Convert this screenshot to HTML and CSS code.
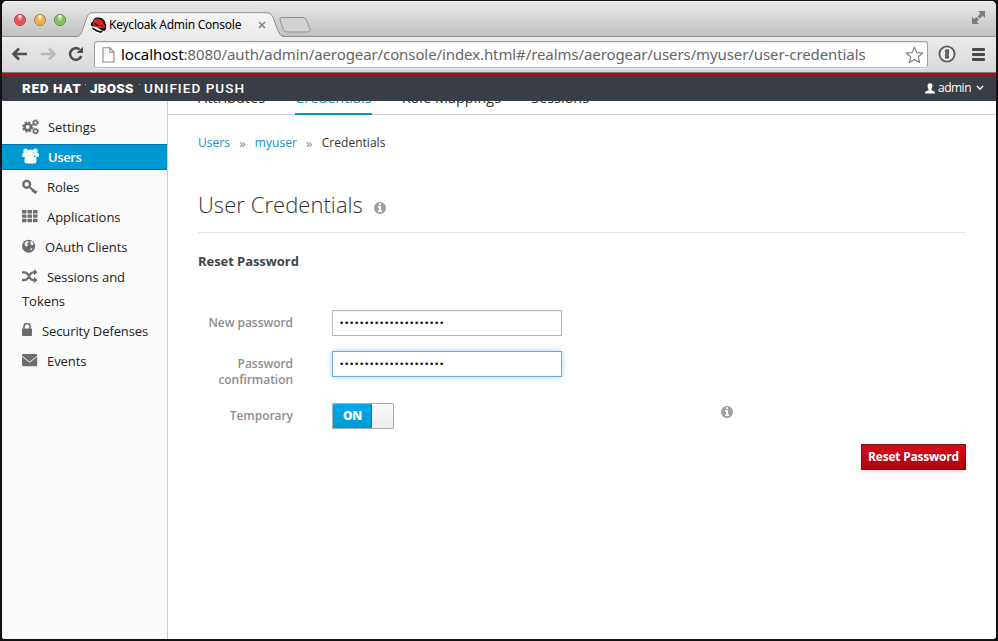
FILE: index.html
```html
<!DOCTYPE html>
<html lang="en">
<head>
<meta charset="utf-8">
<title>Keycloak Admin Console</title>
<link rel="stylesheet" href="styles.css">
</head>
<body>
<svg class="defs" width="0" height="0">
  <symbol id="info" viewBox="0 0 1792 1792"><path d="M1152 1376v-160q0-14-9-23t-23-9h-96v-512q0-14-9-23t-23-9h-320q-14 0-23 9t-9 23v160q0 14 9 23t23 9h96v320h-96q-14 0-23 9t-9 23v160q0 14 9 23t23 9h448q14 0 23-9t9-23zm-128-896v-160q0-14-9-23t-23-9h-192q-14 0-23 9t-9 23v160q0 14 9 23t23 9h192q14 0 23-9t9-23zm640 416q0 209-103 385.500t-279.500 279.500-385.500 103-385.500-103-279.500-279.500-103-385.500 103-385.500 279.500-279.500 385.500-103 385.500 103 279.500 279.500 103 385.500z"/></symbol>
</svg>
<div class="window">
  <div class="titlebar">
    <div class="lights"><i class="light red"></i><i class="light amber"></i><i class="light green"></i></div>
    <div class="tab">
      <svg class="tab-shape" width="208" height="26" viewBox="0 0 208 26"><defs><linearGradient id="tg" x2="0" y2="1"><stop offset="0" stop-color="#f5f5f5"/><stop offset="1" stop-color="#ebebeb"/></linearGradient></defs><path d="M0 25 C4 24.500 5 22 6.500 18 L11 5 Q12.500 .7 17 .7 H191 Q195 .7 197 5 L202 19 Q204 24.500 208 25 V26 H0Z" fill="url(#tg)"/><path d="M0 24.500 C4 24.500 5 22 6.500 18 L11 5 Q12.500 .7 17 .7 H191 Q195 .7 197 5 L202 19 Q204 24.500 208 24.500" fill="none" stroke="#8f8f8f"/></svg>
      <svg class="favicon" width="17" height="17" viewBox="0 0 17 17"><circle cx="8.500" cy="8.500" r="8" fill="#fff"/><path d="M1 9 Q0 6 3 4.500 Q3 1 7 .5 Q13 0 15 4.500 Q17 8 16 12 L14.500 14 Q10 13 7 10Z" fill="#161616"/><path d="M4 5 Q4 1.500 6.500 1.800 L8.500 2.200 Q13 2 13.500 7 Q16 9 14.500 10.500 Q10 12.500 4.500 9 Q1.500 7.500 3 5.500Z" fill="#e0242b"/><path d="M4 6.500 Q8 9.500 13 8.500" stroke="#161616" stroke-width="1.200" fill="none"/><path d="M2 10 L7 13 10 14 14 13 11 16 6 14.500 2.500 12Z" fill="#161616"/></svg>
      <span class="tab-title">Keycloak Admin Console</span>
      <svg class="tab-close" width="8" height="8" viewBox="0 0 8 8"><path d="M1 1 7 7M7 1 1 7" stroke="#808080" stroke-width="1.500"/></svg>
    </div>
    <svg class="new-tab" width="34" height="18" viewBox="0 0 34 18"><path d="M3.500 1.500 H25 Q27.500 1.500 28.500 4 L32 13.500 Q32.500 16 30 16 H9 Q6.500 16 5.500 13.500 L2 4 Q1.300 1.500 3.500 1.500Z" fill="#d2d2d2" stroke="#929292"/></svg>
    <svg class="expand" width="15" height="15" viewBox="0 0 15 15"><path d="M7 1H14V8L11.800 5.800 8.800 8.600 6.600 6.400 9.300 3.300ZM1 7 3.200 9.200 5.500 7 8 9.500 5.700 11.800 8 14H1Z" fill="#7b7b7b"/></svg>
  </div>
  <div class="toolbar">
    <svg class="back" width="17" height="14" viewBox="0 0 17 14"><path d="M16 7H3M8 1.500 2.500 7 8 12.500" fill="none" stroke="#505050" stroke-width="2.700"/></svg>
    <svg class="forward" width="17" height="14" viewBox="0 0 17 14"><path d="M1 7H14M9 1.500 14.500 7 9 12.500" fill="none" stroke="#bababa" stroke-width="2.500"/></svg>
    <svg class="reload" width="16" height="16" viewBox="0 0 16 16"><path d="M11.600 3.500 A5.800 5.800 0 1 0 13.300 10" fill="none" stroke="#505050" stroke-width="2.600"/><path d="M15 .8V7H8.500Z" fill="#505050"/></svg>
    <div class="omnibox">
      <svg class="page-icon" width="13" height="16" viewBox="0 0 13 16"><path d="M1 .8H8L12 5V15H1ZM7.800 1V5.200H12" fill="#fbfbfb" stroke="#8b8b8b" stroke-width="1.100"/></svg>
      <span class="url"><b>localhost</b>:8080/auth/admin/aerogear/console/index.html#/realms/aerogear/users/myuser/user-credentials</span>
      <svg class="star" width="19" height="18" viewBox="0 0 19 18"><path d="M9.500 1.200 11.800 6.600 17.800 7 13.200 10.900 14.700 16.500 9.500 13.500 4.300 16.500 5.800 10.900 1.200 7 7.200 6.600Z" fill="#fff" stroke="#797979" stroke-width="1.100" stroke-linejoin="round"/></svg>
    </div>
    <svg class="onepass" width="18" height="18" viewBox="0 0 18 18"><circle cx="9" cy="9" r="7.600" fill="#eee" stroke="#5d5d5d" stroke-width="1.900"/><path d="M7 4.500H11V9L10.300 9.600 11 10.300V13.500H7V9.300L7.700 8.500 7 7.800Z" fill="#555"/><path d="M9 6V8.500M9 10V12" stroke="#aaa" stroke-width=".7"/></svg>
    <div class="menu"><i></i><i></i><i></i></div>
  </div>
  <header class="masthead">
    <div class="brand"><strong class="w-red">RED HAT</strong><i class="tm"></i><strong class="w-jboss">JBOSS</strong><i class="tm"></i><span class="w-product">UNIFIED PUSH</span></div>
    <div class="account">
      <svg width="10" height="11" viewBox="0 0 10 11"><path d="M5 .3C7 .3 7.500 1.500 7.400 3.200 7.300 5 6.600 5.500 6.400 6.200V7.300L9 8.300Q10 8.900 10 10.500H0Q0 8.900 1 8.300L3.600 7.300V6.200C3.400 5.500 2.700 5 2.600 3.200 2.500 1.500 3 .3 5 .3Z" fill="#fff"/></svg>
      <span>admin</span>
      <svg class="caret" width="8" height="6" viewBox="0 0 8 6"><path d="M1 1 4 4.200 7 1" fill="none" stroke="#fff" stroke-width="1.500"/></svg>
    </div>
  </header>
  <div class="body">
    <nav class="sidebar">
      <a class="item settings"><svg width="17" height="16" viewBox="0 0 17 16"><g fill="none"><circle cx="5.700" cy="8" r="3.200" stroke-width="2.600"/><circle cx="5.700" cy="8" r="4.900" stroke-width="1.500" stroke-dasharray="2.100 1.748"/><circle cx="13.500" cy="3.700" r="1.900" stroke-width="1.500"/><circle cx="13.500" cy="3.700" r="2.900" stroke-width="1" stroke-dasharray="1.300 .978"/><circle cx="13.500" cy="12.200" r="1.900" stroke-width="1.500"/><circle cx="13.500" cy="12.200" r="2.900" stroke-width="1" stroke-dasharray="1.300 .978"/></g></svg><span>Settings</span></a>
      <a class="item users active"><svg width="17" height="16" viewBox="0 0 17 16"><circle cx="3.600" cy="2.800" r="2.300"/><circle cx="13.400" cy="2.800" r="2.300"/><circle cx="8.500" cy="4.800" r="3.200"/><path d="M1.500 4.500Q0 5 0 7.500 0 9 1.500 9H5L6 5ZM15.500 4.500Q17 5 17 7.500 17 9 15.500 9H12L11 5ZM5.500 7Q2.500 7 2.500 13 2.500 15.500 5 15.500H12Q14.500 15.500 14.500 13 14.500 7 11.500 7Z"/></svg><span>Users</span></a>
      <a class="item roles"><svg width="16" height="16" viewBox="0 0 16 16"><circle cx="4.700" cy="5.300" r="3.400" fill="none" stroke-width="2.400"/><path d="M7 7.500 13.500 13.800M10.200 12.800 12.400 10.300M12.500 14.500 14.800 12" fill="none" stroke-width="2"/></svg><span>Roles</span></a>
      <a class="item apps"><svg width="16" height="16" viewBox="0 0 16 16"><path d="M0 1h4.500v3.400H0zM5.500 1H10v3.400H5.500zM11 1h4.500v3.400H11zM0 5.400h4.500v3.400H0zM5.500 5.400H10v3.400H5.500zM11 5.400h4.500v3.400H11zM0 9.800h4.500v3.400H0zM5.500 9.800H10v3.400H5.500zM11 9.800h4.500v3.400H11z"/></svg><span>Applications</span></a>
      <a class="item oauth"><svg width="14" height="16" viewBox="0 0 14 16"><circle cx="6.600" cy="7.200" r="6.500"/><path class="land" d="M3.200 3 6 1.800 6.500 3.500 5 5.200 6.500 6.500 4 7.700 2.500 5.500ZM7.500 2.500 10 2.300 11.800 4.500 10.500 6.500 8.500 5.500 8.800 4ZM8.500 9.500 10.500 9 9.500 11 8.500 11.500Z"/></svg><span>OAuth Clients</span></a>
      <a class="item sessions"><svg width="16" height="16" viewBox="0 0 16 16"><path d="M0 3.300H2.800Q4.500 3.300 6 5.500L8 9Q9.200 11 11 11H12.500M0 11H2.800Q4.500 11 6 9L8 5.500Q9.200 3.300 11 3.300H12.500" fill="none" stroke-width="2.300"/><path d="M12 0 15.500 3.300 12 6.600ZM12 7.700 15.500 11 12 14.300Z" stroke="none"/></svg><span>Sessions and Tokens</span></a>
      <a class="item security"><svg width="10" height="13" viewBox="320 192 1152 1350" preserveAspectRatio="none"><path stroke="none" d="M640 768h512v-192q0-106-75-181t-181-75-181 75-75 181v192zm832 96v576q0 40-28 68t-68 28h-960q-40 0-68-28t-28-68v-576q0-40 28-68t68-28h32v-192q0-184 132-316t316-132 316 132 132 316v192h32q40 0 68 28t28 68z"/></svg><span>Security Defenses</span></a>
      <a class="item events"><svg width="16" height="16" viewBox="0 0 16 16"><path d="M1.200 1H14Q15.200 1 15.200 2.200V2.700L7.600 8.700 0 2.700V2.200Q0 1 1.200 1ZM0 3.700 7.600 9.700 15.200 3.700V12Q15.200 13.200 14 13.200H1.200Q0 13.200 0 12Z" stroke="none"/></svg><span>Events</span></a>
    </nav>
    <main class="content">
      <div class="tabs"><a>Attributes</a><a class="current">Credentials</a><a>Role Mappings</a><a>Sessions</a></div>
      <div class="inner">
        <div class="crumbs"><a>Users</a><i>»</i><a>myuser</a><i>»</i><span>Credentials</span></div>
        <h1><span>User Credentials</span><svg class="info" width="14" height="14"><use href="#info"/></svg></h1>
        <h2>Reset Password</h2>
        <div class="row first"><label>New password</label><div class="field"><span class="dots">•••••••••••••••••••••</span></div></div>
        <div class="row second"><label>Password confirmation</label><div class="field focus"><span class="dots">•••••••••••••••••••••</span></div></div>
        <div class="row third"><label>Temporary</label><div class="switch"><b>ON</b><i></i></div><svg class="info" width="14" height="14"><use href="#info"/></svg></div>
        <div class="actions"><button>Reset Password</button></div>
      </div>
    </main>
  </div>
</div>
</body>
</html>
```
FILE: styles.css
```css
* { box-sizing: border-box; }
html, body { margin: 0; height: 100%; }
body { background: #121214; padding: 1px 2px 2px; font: 13px/24px "Open Sans", sans-serif; color: #333; overflow: hidden; }
svg { display: block; flex: none; }
.defs { position: absolute; }
span, a, label { white-space: nowrap; }
.window { height: 638px; width: 994px; border-radius: 5px 5px 3px 3px; overflow: hidden; background: #fff; }

.titlebar { height: 36px; display: flex; align-items: flex-start; background: linear-gradient(#e9e9e9, #c0c0c0); box-shadow: inset 0 -1px #919191, inset 0 1px #f3f3f3; }
.lights { display: flex; gap: 8px; padding: 13px 0 0 12px; width: 74px; }
.light { width: 12px; height: 12px; border-radius: 50%; border: 1px solid #a33; }
.red { background: radial-gradient(ellipse at 50% 10%, #fff 5%, #ee8989 25%, #e6434c 55%, #ff9a97 100%); border-color: #a73a3d; }
.amber { background: radial-gradient(ellipse at 50% 10%, #fff 5%, #f8ce88 25%, #eba541 55%, #ffe084 100%); border-color: #a77937; }
.green { background: radial-gradient(ellipse at 50% 10%, #fff 5%, #b3dc98 25%, #75b954 55%, #bdf193 100%); border-color: #5b8a45; }
.tab { width: 208px; height: 26px; margin-top: 11px; display: grid; grid-template-columns: 14px 18px 144px 32px; align-items: center; }
.tab-shape { grid-area: 1 / 1 / 2 / 5; }
.favicon { grid-area: 1 / 2; }
.tab-title { grid-area: 1 / 3; font: 12px/24px "Noto Sans", sans-serif; color: #000; letter-spacing: -.24px; padding-left: 1px; }
.tab-close { grid-area: 1 / 4; margin-left: 6px; }
.new-tab { margin: 15px 0 0 -6px; }
.expand { margin: 9px 10px 0 auto; }

.toolbar { height: 36px; display: flex; align-items: center; background: linear-gradient(#ebebeb, #d8d8d8); border-bottom: 1px solid #777; padding-left: 9px; }
.back { margin-top: -1px; }
.forward { margin: -1px 0 0 12px; }
.reload { margin: -1px 0 0 11px; }
.omnibox { display: flex; align-items: center; height: 27px; width: 834px; margin-left: 10px; border: 1px solid #a0a0a0; border-bottom-color: #b8b8b8; border-radius: 3px; background: #fff; padding-left: 7px; box-shadow: inset 0 1px #e5e5e5, 0 1px #f1f1f1; }
.url { font: 15px/24px "Noto Sans", sans-serif; color: #666; margin: -1px 0 0 6px; width: 784px; letter-spacing: -.095px; }
.url b { font-weight: 400; color: #000; }
.onepass { margin: -1px 0 0 10px; }
.menu { width: 13px; margin-left: 16px; display: grid; gap: 2px; }
.menu i { height: 3px; background: #4a4a4a; border-radius: 1px; }

.masthead { height: 28px; border-top: 3px solid #c00; background: #393d45; display: flex; align-items: center; justify-content: space-between; padding: 0 12px 0 20px; color: #fff; }
.brand { display: flex; align-items: center; font: 13.5px/24px "Roboto", sans-serif; margin-top: -1px; }
.brand strong { font-weight: 900; }
.w-red { width: 63px; letter-spacing: .65px; }
.tm { width: 1px; height: 1px; background: #bbb; margin: -8px 4px 0 0; }
.w-jboss { width: 49px; letter-spacing: .25px; }
.w-product { letter-spacing: 1.05px; font-weight: 500; }
.account { display: flex; align-items: center; font-size: 12px; line-height: 24px; }
.account span { margin: -1px 5px 0 3px; font-weight: 500; letter-spacing: -.5px; }
.caret { margin-top: -2px; }

.body { display: flex; height: 538px; }
.sidebar { width: 166px; border-right: 1px solid #ccc; background: #fafafa; padding-top: 11px; color: #222; }
.item { display: block; padding: 0 10px 0 20px; border: 1px solid transparent; border-width: 1px 0; margin: 2px 0; margin-bottom: 4px; white-space: normal; letter-spacing: -.05px; }
.item span { white-space: normal; }
.item svg { display: inline-block; vertical-align: -3px; fill: #6d6d6d; stroke: #6d6d6d; stroke-width: 0; margin-right: 9px; }
.active { background: #0099d3; border-color: #0076b7; color: #fff; font-weight: 600; letter-spacing: -.4px; }
.item.active svg { fill: #fff; vertical-align: -2px; }
.item .land { fill: #f0f0f0; }
.item.security svg { vertical-align: 0; margin-right: 10px; }
.security { letter-spacing: -.1px; }

.content { flex: 1; }
.tabs { display: flex; height: 14px; padding-left: 30px; box-shadow: inset 0 -1px #ccc; gap: 30px; font-size: 14.5px; align-items: flex-end; overflow: hidden; }
.tabs a { height: 31px; line-height: 27px; flex: none; }
.tabs .current { color: #0099d3; box-shadow: inset 0 -2px #0099d3; }
.inner { padding: 0 30px; }
.crumbs { display: flex; margin-top: 16px; font-size: 12px; letter-spacing: .03px; }
.crumbs a { color: #0a8fcf; }
.crumbs i { font-style: normal; font-size: 13px; color: #888; margin: 0 9.200px; }
h1 { display: flex; align-items: center; font: 300 22px/32px "Open Sans", sans-serif; margin: 34px 0 0; height: 44px; padding-bottom: 14px; border-bottom: 1px solid #e6e6e6; letter-spacing: .05px; }
.info { fill: #a0a0a0; }
h1 .info { margin: 8px 0 0 10px; }
h2 { font-size: 13px; line-height: 24px; font-weight: 700; margin: 16px 0 0; color: #444; letter-spacing: -.06px; }
.row { display: flex; }
label { width: 95px; margin-right: 39px; text-align: right; color: #8e8e8e; font-weight: 600; font-size: 12px; line-height: 16px; padding-top: 5px; white-space: normal; letter-spacing: -.05px; }
.first { margin-top: 37px; height: 41px; }
.second { height: 52px; }
.third { height: 41px; }
.field { width: 230px; height: 26px; border: 1px solid #b8b8b8; box-shadow: inset 0 1px 1px #eee; padding-left: 6px; display: flex; align-items: center; }
.focus { border-color: #66afe9; box-shadow: 0 0 6px #9fd0f5; height: 26px; }
.dots { font: 9px/24px "DejaVu Sans", sans-serif; letter-spacing: -.31px; color: #111; }
.switch { display: flex; width: 62px; height: 26px; border: 1px solid #aaa; border-radius: 1px; background: linear-gradient(#fafafa, #ededed); }
.switch b { width: 39px; padding-left: 1px; text-align: center; color: #fff; font-size: 12px; font-weight: 800; letter-spacing: -.4px; line-height: 24px; background: linear-gradient(#00a9ec, #009bd3); border-right: 1px solid #0088be; }
.third .info { margin: 2px 0 0 326px; }
.actions { display: flex; justify-content: flex-end; }
button { width: 105px; height: 26px; padding: 0; border: 1px solid #781316; background: linear-gradient(#d9091a, #ab070f); color: #fff; font: 700 12px/24px "Open Sans", sans-serif; letter-spacing: -.22px; box-shadow: 0 2px 3px #0002; white-space: nowrap; }
```
